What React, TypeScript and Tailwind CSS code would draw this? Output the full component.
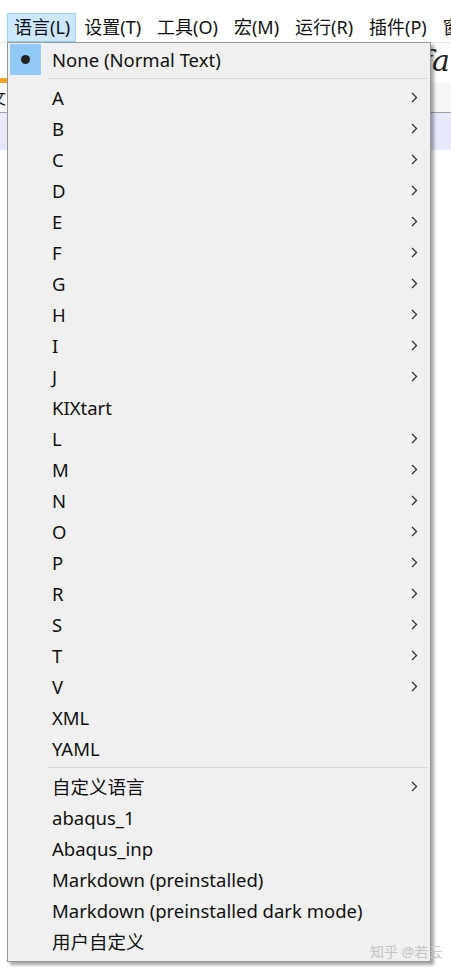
import { Fragment } from "react";

// Elementos del menú de lenguajes
const letras = [
  { label: "A", sub: true },
  { label: "B", sub: true },
  { label: "C", sub: true },
  { label: "D", sub: true },
  { label: "E", sub: true },
  { label: "F", sub: true },
  { label: "G", sub: true },
  { label: "H", sub: true },
  { label: "I", sub: true },
  { label: "J", sub: true },
  { label: "KIXtart", sub: false },
  { label: "L", sub: true },
  { label: "M", sub: true },
  { label: "N", sub: true },
  { label: "O", sub: true },
  { label: "P", sub: true },
  { label: "R", sub: true },
  { label: "S", sub: true },
  { label: "T", sub: true },
  { label: "V", sub: true },
  { label: "XML", sub: false },
  { label: "YAML", sub: false },
];

const personalizados = [
  { label: "自定义语言", sub: true },
  { label: "abaqus_1", sub: false },
  { label: "Abaqus_inp", sub: false },
  { label: "Markdown (preinstalled)", sub: false },
  { label: "Markdown (preinstalled dark mode)", sub: false },
  { label: "用户自定义", sub: false },
];

const menubar = ["语言(L)", "设置(T)", "工具(O)", "宏(M)", "运行(R)", "插件(P)", "窗"];

const Chevron = () => (
  <svg width="7" height="11" viewBox="0 0 7 11" className="mr-[12px]">
    <polyline
      points="1,1 5.5,5.5 1,10"
      fill="none"
      stroke="#333"
      strokeWidth="1.3"
    />
  </svg>
);

const Separator = () => (
  <div className="h-[7px] flex items-center pl-[38px] pr-[2px]">
    <div className="h-px w-full bg-[#d7d7d7]" />
  </div>
);

const Item = ({ label, sub }: { label: string; sub: boolean }) => (
  <div className="h-[31px] flex items-center justify-between">
    <span className="pl-[42px]">{label}</span>
    {sub && <Chevron />}
  </div>
);

export default function App() {
  return (
    <div
      className="relative w-[451px] h-[971px] bg-white overflow-hidden text-[#111]"
      style={{ fontFamily: '"Noto Sans", "Noto Sans CJK SC", sans-serif' }}
    >
      {/* barra de menú */}
      <div className="h-[42px] flex items-end">
        <div className="flex h-[29px] items-center pl-[7px] text-[18px] whitespace-nowrap">
          {menubar.map((m, i) => (
            <div
              key={m}
              className={
                i === 0
                  ? "h-[29px] flex items-center pl-[6px] pr-[5px] bg-[#cce8ff] border border-[#99d1ff]"
                  : "h-[29px] flex items-center px-[7px] border border-transparent"
              }
            >
              {m}
            </div>
          ))}
        </div>
      </div>

      {/* fondo de la aplicación */}
      <div className="h-[36px] border-t border-[#e5e5e5] flex justify-end items-center pr-[1px]">
        <span className="text-[30px] italic text-[#222] leading-none" style={{ fontFamily: '"DejaVu Serif", serif' }}>
          fa
        </span>
      </div>
      <div className="h-[5px] w-[40px] bg-[#f5a623]" />
      <div className="h-[30px] bg-[#f7f7f7] border-b border-[#a0a0a0] flex items-center text-[16px] -ml-[10px]">
        文
      </div>
      <div className="h-[37px] bg-[#e8e8ff]" />

      {/* menú desplegable */}
      <div className="absolute left-[7px] top-[42px] w-[424px] bg-[#f0f0f0] border border-[#979797] shadow-[3px_3px_3px_rgba(0,0,0,0.35)] pt-[1px] pb-[4px] pl-[2px] text-[18.5px]">
        <div className="h-[31px] flex items-center">
          <div className="w-[31px] h-[31px] bg-[#91c9f7] flex items-center justify-center">
            <div className="w-[9px] h-[9px] rounded-full bg-[#222]" />
          </div>
          <span className="pl-[11px]">None (Normal Text)</span>
        </div>
        <Separator />
        {letras.map((l) => (
          <Item key={l.label} {...l} />
        ))}
        <Separator />
        {personalizados.map((l) => (
          <Fragment key={l.label}>
            <Item {...l} />
          </Fragment>
        ))}
      </div>

      {/* marca de agua */}
      <div className="absolute left-[370px] top-[941px] text-[14px] text-[#c4c4c4] whitespace-nowrap">
        知乎 @若云
      </div>
    </div>
  );
}
